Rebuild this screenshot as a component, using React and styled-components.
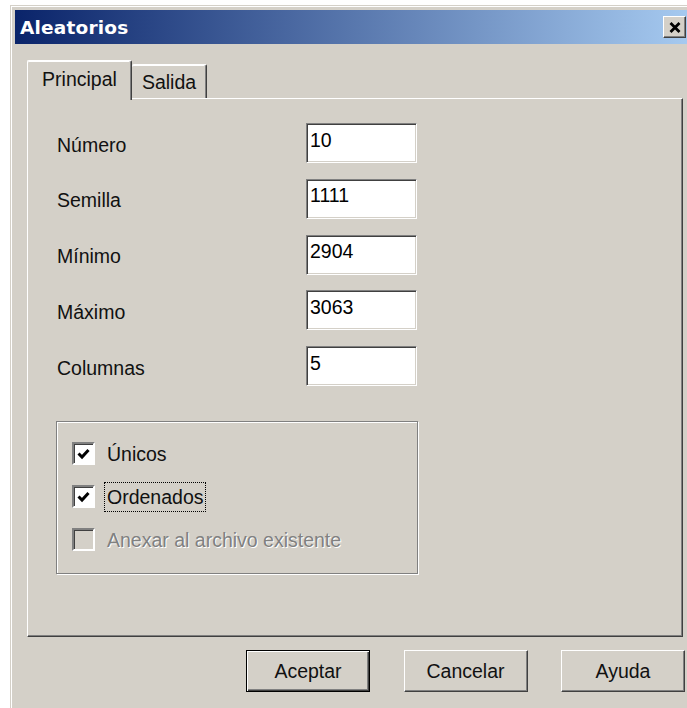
import React from "react";
import styled, { createGlobalStyle } from "styled-components";

const GlobalStyle = createGlobalStyle`
  html, body {
    margin: 0;
    background: #ffffff;
    overflow: hidden;
  }
  * {
    box-sizing: border-box;
  }
`;

const Window = styled.div`
  /* Classic dialog frame */
  margin: 5px 0 0 10px;
  width: 684px;
  height: 703px;
  padding: 4px;
  background: #d4d0c8;
  border-top: 1px solid #d4d0c8;
  border-left: 1px solid #d4d0c8;
  box-shadow: inset 1px 1px 0 #ffffff;
  font-family: "Liberation Sans", Arial, sans-serif;
  font-size: 19.5px;
  color: #111;
  display: flex;
  flex-direction: column;
`;

const TitleBar = styled.div`
  height: 34px;
  display: flex;
  align-items: center;
  justify-content: space-between;
  padding: 0 4px 0 5px;
  background: linear-gradient(to right, #0a246a, #a6caf0);
`;

const Title = styled.span`
  font-family: "DejaVu Sans", Verdana, sans-serif;
  font-weight: bold;
  font-size: 18.5px;
  color: #ffffff;
  letter-spacing: 0.2px;
`;

const CloseButton = styled.button`
  width: 23px;
  height: 22px;
  padding: 0;
  display: flex;
  align-items: center;
  justify-content: center;
  background: #d4d0c8;
  border: 1px solid;
  border-color: #ffffff #404040 #404040 #ffffff;
  box-shadow: inset -1px -1px 0 #808080;
`;

const Body = styled.div`
  flex: 1;
  padding: 16px 5px 0 12px;
  display: flex;
  flex-direction: column;
`;

const TabStrip = styled.div`
  display: flex;
  align-items: flex-end;
  height: 38px;
  position: relative;
  z-index: 1;
`;

const Tab = styled.div`
  width: ${(p) => (p.$active ? 105 : 75)}px;
  height: ${(p) => (p.$active ? 40 : 34)}px;
  margin-bottom: ${(p) => (p.$active ? -2 : 0)}px;
  padding-top: ${(p) => (p.$active ? 6 : 5)}px;
  line-height: 24px;
  text-align: center;
  background: #d4d0c8;
  border-top: 1px solid #ffffff;
  border-left: ${(p) => (p.$active ? "1px solid #ffffff" : "none")};
  border-right: 1px solid #404040;
  border-radius: 2px 2px 0 0;
  box-shadow: inset -1px 0 0 #808080, inset 0 1px 0 #ffffff;
`;

const TabPanel = styled.div`
  width: 656px;
  height: 539px;
  padding: 24px 0 0 29px;
  border: 1px solid;
  border-color: #ffffff #404040 #404040 #ffffff;
  box-shadow: inset -1px -1px 0 #808080;
`;

const FieldGrid = styled.div`
  display: grid;
  grid-template-columns: 249px 111px;
  grid-auto-rows: 40px;
  row-gap: 15.8px;
`;

const FieldLabel = styled.label`
  align-self: center;
  line-height: 24px;
  padding-top: 3px;
`;

const TextField = styled.input`
  width: 111px;
  height: 40px;
  padding: 0 3px 6px;
  font: inherit;
  color: #000;
  background: #ffffff;
  border: 1px solid;
  border-color: #808080 #ffffff #ffffff #808080;
  box-shadow: inset 1px 1px 0 #404040, inset -1px -1px 0 #d4d0c8;
  outline: none;
`;

const GroupBox = styled.div`
  width: 362px;
  height: 153px;
  margin: 35px 0 0 -1px;
  padding: 20px 15px;
  border: 1px solid #808080;
  box-shadow: inset 1px 1px 0 #ffffff, 1px 1px 0 #ffffff;
  display: flex;
  flex-direction: column;
  gap: 20px;
`;

const CheckRow = styled.div`
  display: flex;
  align-items: center;
  gap: 9px;
  height: 23px;
`;

const CheckBox = styled.span`
  width: 23px;
  height: 23px;
  flex: none;
  display: flex;
  align-items: center;
  justify-content: center;
  background: ${(p) => (p.$disabled ? "#d4d0c8" : "#ffffff")};
  border: 2px solid;
  border-color: #808080 #ffffff #ffffff #808080;
  box-shadow: inset 1px 1px 0 #404040;
`;

const CheckText = styled.span`
  line-height: 24px;
  padding: 2px;
  border: 1px dotted ${(p) => (p.$focused ? "#000" : "transparent")};
  color: ${(p) => (p.$disabled ? "#808080" : "#111")};
  text-shadow: ${(p) => (p.$disabled ? "1px 1px 0 #ffffff" : "none")};
`;

const ButtonRow = styled.div`
  display: flex;
  justify-content: flex-end;
  gap: 33.5px;
  margin-top: 13px;
`;

const DialogButton = styled.button`
  width: 124px;
  height: 42px;
  padding: 0;
  font: inherit;
  color: #111;
  background: #d4d0c8;
  border: 1px solid;
  border-color: ${(p) => (p.$default ? "#000" : "#ffffff #404040 #404040 #ffffff")};
  box-shadow: ${(p) =>
    p.$default
      ? "inset 1px 1px 0 #ffffff, inset -1px -1px 0 #404040, inset -2px -2px 0 #808080"
      : "inset -1px -1px 0 #808080"};
`;

function CheckMark() {
  return (
    <svg width="13" height="12" viewBox="0 0 13 12">
      <path d="M1.5 5.5 L5 9 L11.5 2" fill="none" stroke="#000" strokeWidth="3" />
    </svg>
  );
}

function Option({ label, checked, disabled, focused }) {
  return (
    <CheckRow>
      <CheckBox $disabled={disabled}>{checked && <CheckMark />}</CheckBox>
      <CheckText $disabled={disabled} $focused={focused}>
        {label}
      </CheckText>
    </CheckRow>
  );
}

const fields = [
  ["Número", "10"],
  ["Semilla", "1111"],
  ["Mínimo", "2904"],
  ["Máximo", "3063"],
  ["Columnas", "5"],
];

export default function App() {
  return (
    <>
      <GlobalStyle />
      <Window>
        <TitleBar>
          <Title>Aleatorios</Title>
          <CloseButton>
            <svg width="12" height="11" viewBox="0 0 12 11">
              <path d="M1.5 1 L10.5 10 M10.5 1 L1.5 10" stroke="#000" strokeWidth="2.8" />
            </svg>
          </CloseButton>
        </TitleBar>
        <Body>
          <TabStrip>
            <Tab $active>Principal</Tab>
            <Tab>Salida</Tab>
          </TabStrip>
          <TabPanel>
            <FieldGrid>
              {fields.map(([label, value]) => (
                <React.Fragment key={label}>
                  <FieldLabel>{label}</FieldLabel>
                  <TextField defaultValue={value} />
                </React.Fragment>
              ))}
            </FieldGrid>
            <GroupBox>
              <Option label="Únicos" checked />
              <Option label="Ordenados" checked focused />
              <Option label="Anexar al archivo existente" disabled />
            </GroupBox>
          </TabPanel>
          <ButtonRow>
            <DialogButton $default>Aceptar</DialogButton>
            <DialogButton>Cancelar</DialogButton>
            <DialogButton>Ayuda</DialogButton>
          </ButtonRow>
        </Body>
      </Window>
    </>
  );
}
